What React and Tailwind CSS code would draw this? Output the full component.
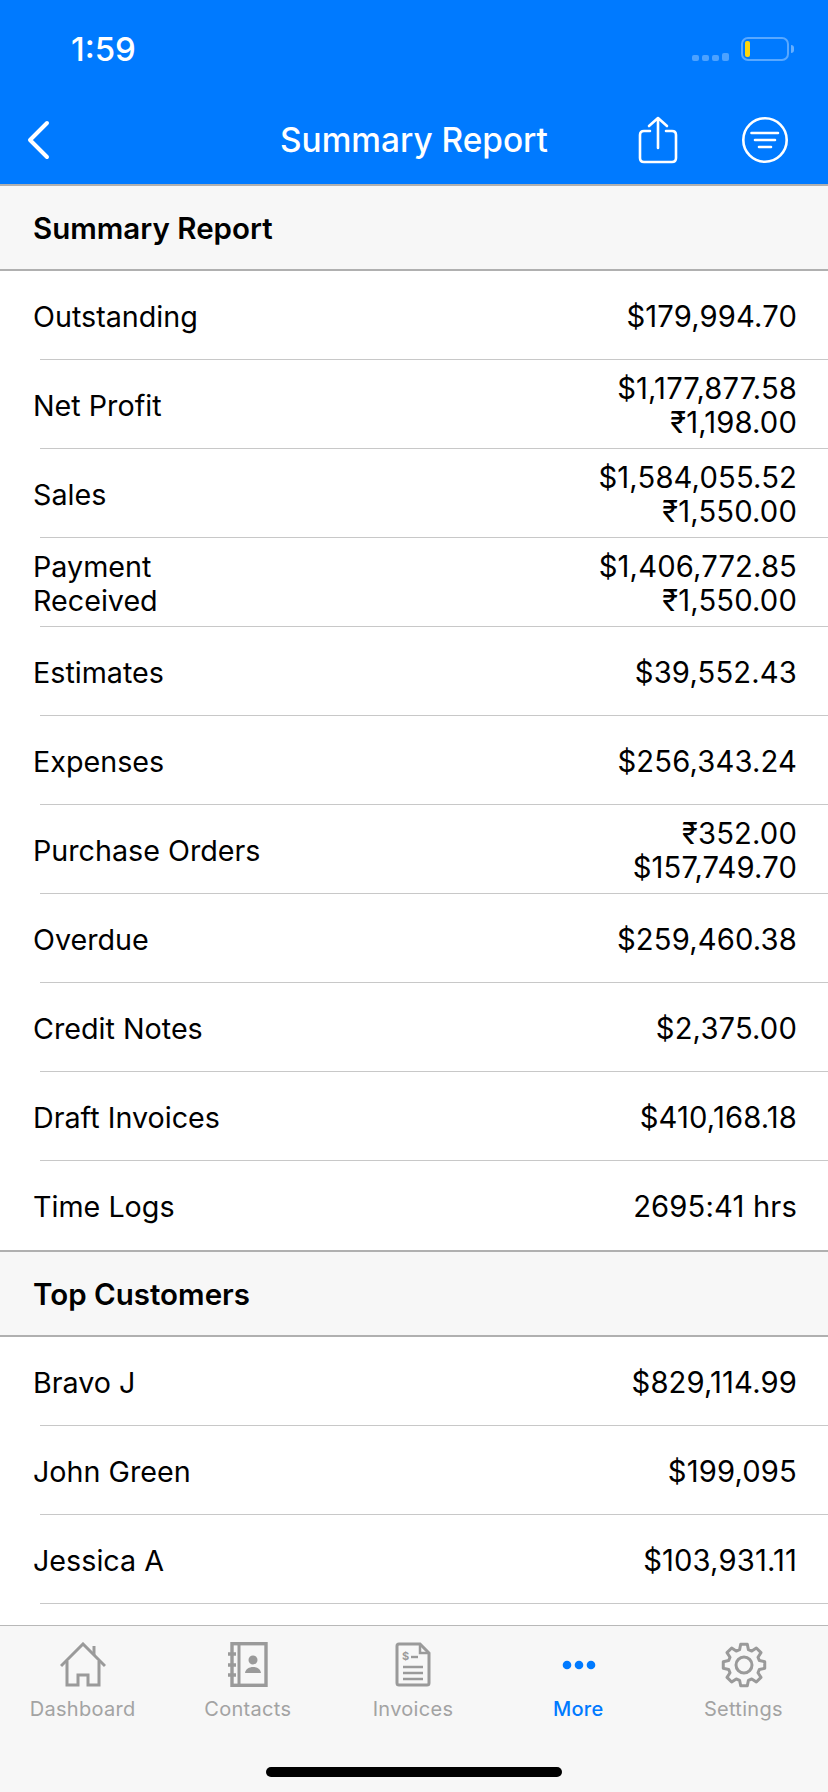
const F = { fontFamily: 'Inter, "Noto Sans", sans-serif' };

const summary = [
  [["Outstanding"], ["$179,994.70"]],
  [["Net Profit"], ["$1,177,877.58", "₹1,198.00"]],
  [["Sales"], ["$1,584,055.52", "₹1,550.00"]],
  [["Payment", "Received"], ["$1,406,772.85", "₹1,550.00"]],
  [["Estimates"], ["$39,552.43"]],
  [["Expenses"], ["$256,343.24"]],
  [["Purchase Orders"], ["₹352.00", "$157,749.70"]],
  [["Overdue"], ["$259,460.38"]],
  [["Credit Notes"], ["$2,375.00"]],
  [["Draft Invoices"], ["$410,168.18"]],
  [["Time Logs"], ["2695:41 hrs"]],
];
const customers = [
  [["Bravo J"], ["$829,114.99"]],
  [["John Green"], ["$199,095"]],
  [["Jessica A"], ["$103,931.11"]],
];

function Row({ label, value, last }) {
  return (
    <div className="h-[89px] pl-[40px] relative">
      <div className={"h-full flex items-center justify-between pr-[31px] pt-[4px] border-b-[1px] " + (last ? "border-transparent" : "border-[#c8c8c8]")}>
        <div className="-ml-[7px] text-[28.7px] leading-[34px] text-black">
          {label.map((l) => <div key={l}>{l}</div>)}
        </div>
        <div className="text-[29.2px] leading-[34px] tracking-[0.15px] text-black text-right">
          {value.map((l) => <div key={l}>{l}</div>)}
        </div>
      </div>
    </div>
  );
}

function SectionHead({ children }) {
  return (
    <div className="h-[85px] bg-[#f7f7f7] border-b-2 border-[#b0b0b0] flex items-center pl-[33px] pt-[1px] text-[29.5px] font-semibold text-black">
      {children}
    </div>
  );
}

function Tab({ icon, label, active }) {
  return (
    <div className="flex-1 flex flex-col items-center">
      <div className="h-[45px] flex items-center justify-center">{icon}</div>
      <div className={"mt-[10px] text-[20px] leading-[24px] tracking-[0.3px] " + (active ? "text-[#007aff] font-medium" : "text-[#a3a3a3]")}>{label}</div>
    </div>
  );
}

const HomeI = (
  <svg width="46" height="45" viewBox="0 0 46 45" fill="none" stroke="#9a9a9a" strokeWidth="3">
    <path d="M1 24 L23 2 L45 24" />
    <path d="M34 13 V4" />
    <path d="M7 19 V43 H18 V33 H28 V43 H39 V19" />
  </svg>
);
const ContactsI = (
  <svg width="40" height="45" viewBox="0 0 40 45" fill="none">
    <rect x="4" y="1.7" width="34" height="41.6" stroke="#9a9a9a" strokeWidth="3.4" />
    <path d="M11 2 V44" stroke="#9a9a9a" strokeWidth="3" />
    <path d="M0 12 H8 M0 23 H8 M0 33 H8" stroke="#9a9a9a" strokeWidth="3.4" />
    <circle cx="25" cy="18" r="4.5" fill="#9a9a9a" />
    <path d="M17 31 C18 23 32 23 33 31 Z" fill="#9a9a9a" />
  </svg>
);
const InvoiceI = (
  <svg width="36" height="45" viewBox="0 0 36 45" fill="none" stroke="#9a9a9a">
    <path d="M25 2 H4 Q2 2 2 4 V41 Q2 43 4 43 H32 Q34 43 34 41 V11 Z" strokeWidth="3" />
    <path d="M25 2 V11 H34" strokeWidth="2.5" />
    <path d="M8 25 H28 M8 31 H28 M8 37 H28" strokeWidth="2.6" />
    <text x="7" y="18" fontSize="11" fontWeight="700" fill="#9a9a9a" stroke="none" fontFamily="Inter, sans-serif">$</text>
    <path d="M16 15 H23" strokeWidth="2.4" />
  </svg>
);
const MoreI = (
  <svg className="ml-[1px]" width="34" height="10" viewBox="0 0 34 10" fill="#007aff">
    <circle cx="5" cy="5" r="4.3" />
    <circle cx="17" cy="5" r="4.3" />
    <circle cx="29" cy="5" r="4.3" />
  </svg>
);
const gearAngles = Array.from({ length: 8 }).map((_, i) => i * 45);
const GearI = (
  <svg className="ml-[2px]" width="46" height="46" viewBox="-23 -23 46 46" fill="none" stroke="#9a9a9a" strokeWidth="3" strokeLinejoin="round">
    <path d={(() => {
      let d = "";
      gearAngles.forEach((a, i) => {
        const p = (r, da) => {
          const t = ((a + da - 90) * Math.PI) / 180;
          return (r * Math.cos(t)).toFixed(2) + " " + (r * Math.sin(t)).toFixed(2);
        };
        d += (i === 0 ? "M" : "L") + p(16, -16) + " L" + p(21, -9) + " L" + p(21, 9) + " L" + p(16, 16) + " ";
      });
      return d + "Z";
    })()} />
    <circle r="8" />
  </svg>
);

export default function App() {
  return (
    <div className="w-[828px] h-[1792px] bg-white flex flex-col overflow-hidden relative" style={F}>
      <div className="h-[186px] shrink-0 bg-[#007aff] border-b-2 border-[#b0b0b0] flex flex-col">
        <div className="h-[96px] relative flex items-start">
          <div className="ml-[71px] mt-[29px] text-[33px] leading-[40px] font-medium text-white">1:59</div>
          <div className="ml-auto mr-[34px] mt-[37px] flex items-center">
            <div className="flex items-end gap-[3px] mt-[16px] mr-[12px]">
              <div className="w-[7px] h-[6px] rounded-[2px] bg-white/30"></div>
              <div className="w-[7px] h-[6px] rounded-[2px] bg-white/30"></div>
              <div className="w-[7px] h-[6px] rounded-[2px] bg-white/30"></div>
              <div className="w-[7px] h-[8px] rounded-[2px] bg-white/30"></div>
            </div>
            <div className="w-[48px] h-[24px] rounded-[7px] border-2 border-white/35 flex items-center pl-[2px]">
              <div className="w-[5px] h-[16px] rounded-[2px] bg-[#ffd60a]"></div>
            </div>
            <div className="w-[3px] h-[8px] rounded-r-[3px] bg-white/40 ml-[2px]"></div>
          </div>
        </div>
        <div className="flex-1 flex items-center relative">
          <svg className="ml-[24px]" width="28" height="40" viewBox="0 0 28 40" fill="none" stroke="white" strokeWidth="4" strokeLinecap="round" strokeLinejoin="round">
            <path d="M23 3 L6 20 L23 37" />
          </svg>
          <div className="absolute left-0 right-0 text-center text-[33.4px] leading-[40px] font-medium text-white">Summary Report</div>
          <svg className="ml-auto" width="40" height="48" viewBox="0 0 40 48" fill="none" stroke="white" strokeWidth="2.6" strokeLinecap="round" strokeLinejoin="round">
            <path d="M12 15 H6 Q2 15 2 19 V42 Q2 46 6 46 H34 Q38 46 38 42 V19 Q38 15 34 15 H28" />
            <path d="M20 32 V2 M11 10 L20 2 L29 10" />
          </svg>
          <svg className="ml-[63px] mr-[39px]" width="48" height="48" viewBox="0 0 48 48" fill="none" stroke="white" strokeWidth="2.6" strokeLinecap="round">
            <circle cx="24" cy="24" r="21.7" />
            <path d="M10.5 17 H37 M14 24 H34 M18 31 H30" />
          </svg>
        </div>
      </div>

      <div className="flex-1 overflow-hidden">
        <SectionHead>Summary Report</SectionHead>
        {summary.map(([l, v], i) => <Row key={i} label={l} value={v} last={i === summary.length - 1} />)}
        <div className="border-t-2 border-[#b0b0b0]">
          <SectionHead>Top Customers</SectionHead>
        </div>
        {customers.map(([l, v], i) => <Row key={i} label={l} value={v} />)}
      </div>

      <div className="h-[167px] shrink-0 bg-[#f7f7f7] border-t-[1px] border-[#b8b8b8] relative">
        <div className="flex pr-[2px] pt-[16px]">
          <Tab icon={HomeI} label="Dashboard" />
          <Tab icon={ContactsI} label="Contacts" />
          <Tab icon={InvoiceI} label="Invoices" />
          <Tab icon={MoreI} label="More" active />
          <Tab icon={GearI} label="Settings" />
        </div>
        <div className="absolute left-[266px] top-[141px] w-[296px] h-[10px] rounded-full bg-black"></div>
      </div>
    </div>
  );
}
